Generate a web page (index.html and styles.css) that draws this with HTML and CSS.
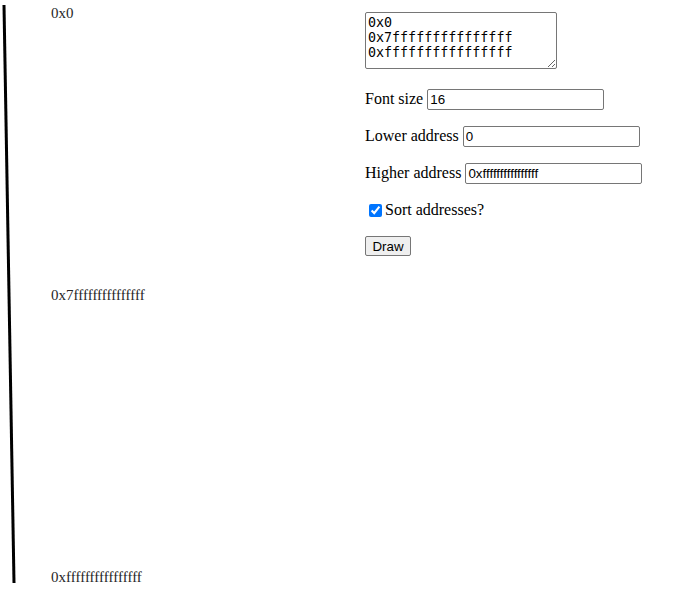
FILE: index.html
```html
<!DOCTYPE html>
<html>
<head>
<meta charset="utf-8">
<link rel="stylesheet" href="styles.css">
</head>
<body>
<div class="page">
  <svg class="chart" width="365" height="593" viewBox="0 0 365 593">
    <line x1="4" y1="5" x2="14" y2="583" stroke="#000" stroke-width="3"/>
    <text x="51" y="18" class="addr">0x0</text>
    <text x="51" y="300" class="addr">0x7fffffffffffffff</text>
    <text x="51" y="582" class="addr">0xffffffffffffffff</text>
  </svg>
  <form class="controls">
    <textarea class="addresses">0x0
0x7fffffffffffffff
0xffffffffffffffff</textarea>
    <div class="row"><label class="lbl">Font size</label><input class="field" type="text" value="16"></div>
    <div class="row"><label class="lbl">Lower address</label><input class="field" type="text" value="0"></div>
    <div class="row"><label class="lbl">Higher address</label><input class="field" type="text" value="0xffffffffffffffff"></div>
    <div class="row check-row"><input class="check" type="checkbox" checked><label class="lbl">Sort addresses?</label></div>
    <div class="row btn-row"><button class="btn" type="button">Draw</button></div>
  </form>
</div>
</body>
</html>
```
FILE: styles.css
```css
html, body {
  margin: 0;
  padding: 0;
  background: #fff;
}
.page {
  display: flex;
  align-items: flex-start;
}
.chart {
  display: block;
  flex-shrink: 0;
}
.addr {
  font-family: "Liberation Serif", serif;
  font-size: 15px;
  fill: #262626;
}
.controls {
  display: flex;
  flex-direction: column;
  padding-top: 12px;
  font-family: "Liberation Serif", serif;
  font-size: 16px;
  color: #000;
}
.addresses {
  display: block;
  box-sizing: border-box;
  width: 192px;
  height: 57px;
  margin: 0 0 4px 0;
  padding: 2px;
  border: 1px solid #767676;
  border-radius: 2px;
  font-family: "DejaVu Sans Mono", monospace;
  font-size: 13.33px;
  line-height: 15px;
  color: #000;
  overflow: hidden;
}
.row {
  display: flex;
  align-items: baseline;
  height: 21px;
  margin-top: 16px;
}
.lbl {
  margin-right: 4px;
  white-space: nowrap;
}
.field {
  box-sizing: border-box;
  width: 177px;
  height: 21px;
  margin: 0;
  padding: 1px 2px;
  border: 1px solid #767676;
  border-radius: 2px;
  font-family: "Liberation Sans", Arial, sans-serif;
  font-size: 13.33px;
  color: #000;
}
.check-row {
  align-items: center;
  height: 20px;
}
.check {
  width: 13px;
  height: 13px;
  margin: 3px 3px 3px 4px;
}
.btn-row {
  height: 20px;
}
.btn {
  box-sizing: border-box;
  height: 20px;
  width: 46px;
  padding: 1px 6px;
  border: 1px solid #767676;
  border-radius: 2px;
  background: #efefef;
  font-family: "Liberation Sans", Arial, sans-serif;
  font-size: 13.33px;
  color: #000;
}
```
